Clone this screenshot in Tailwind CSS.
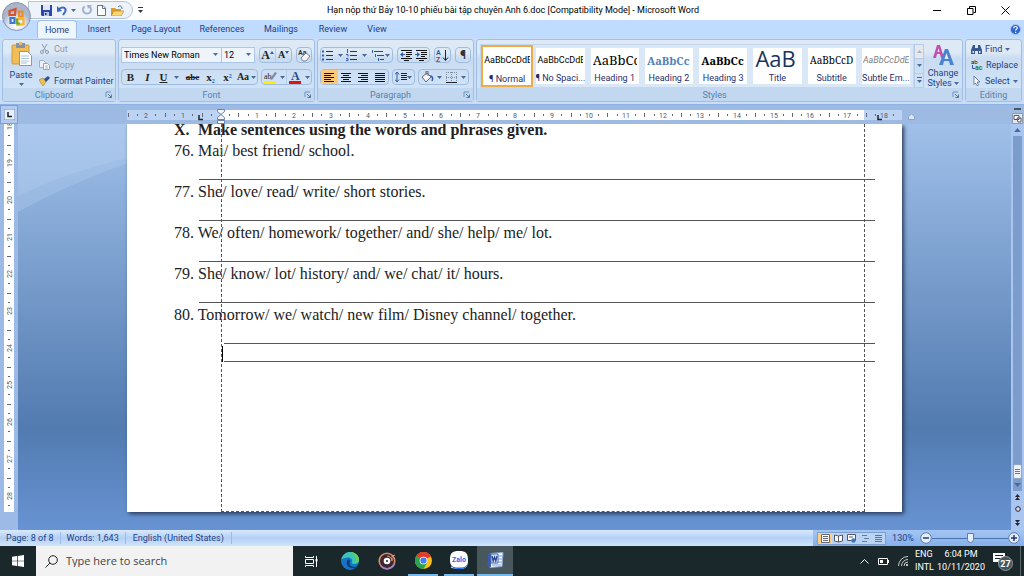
<!DOCTYPE html>
<html lang="en">
<head>
<meta charset="utf-8">
<meta name="viewport" content="width=device-width, initial-scale=1">
<title>Microsoft Word</title>
<script src="https://cdn.jsdelivr.net/npm/@tailwindcss/browser@4"></script>
</head>
<body class="h-screen overflow-hidden flex flex-col font-['Roboto','Noto_Sans',sans-serif] text-[9px] leading-3 text-[#1e3f85] bg-[#9cb9e3] whitespace-nowrap">

<svg class="hidden" aria-hidden="true">
  <symbol id="drop" viewBox="0 0 5 3"><path d="M0 0h5L2.500 3z" fill="#4a6a9c"/></symbol>
  <symbol id="launch" viewBox="0 0 8 8"><path d="M1 6V1h5" fill="none" stroke="#6f93c0"/><path d="M3 3l3 3M6.500 3.500v3h-3" fill="none" stroke="#55779f"/></symbol>
  <symbol id="al" viewBox="0 0 12 10"><path d="M1 1.500h10M1 3.500h7M1 5.500h10M1 7.500h7M1 9.500h10" stroke="#111"/></symbol>
  <symbol id="ac" viewBox="0 0 12 10"><path d="M1 1.500h10M3 3.500h6M1 5.500h10M3 7.500h6M1 9.500h10" stroke="#111"/></symbol>
  <symbol id="ar" viewBox="0 0 12 10"><path d="M1 1.500h10M4 3.500h7M1 5.500h10M4 7.500h7M1 9.500h10" stroke="#111"/></symbol>
  <symbol id="aj" viewBox="0 0 12 10"><path d="M1 1.500h10M1 3.500h10M1 5.500h10M1 7.500h10M1 9.500h10" stroke="#111"/></symbol>
  <symbol id="bul" viewBox="0 0 11 12"><path d="M4 2.500h7M4 6.500h7M4 10.500h7" stroke="#334"/><path d="M0 1.500h2v2H0zM0 5.500h2v2H0zM0 9.500h2v2H0z" fill="#2f5ba8"/></symbol>
  <symbol id="num" viewBox="0 0 11 12"><path d="M4 2.500h7M4 6.500h7M4 10.500h7" stroke="#334"/><path d="M1.500 0v4M0 5.500h2v2M0 9.500h2v2H0" fill="none" stroke="#2f5ba8"/></symbol>
  <symbol id="multi" viewBox="0 0 14 12"><path d="M3 2.500h9M6 6.500h7M9 10.500h4" stroke="#445"/><path d="M1.500 1v3M4.500 5v3M7.500 9v3" stroke="#2f5ba8"/></symbol>
  <symbol id="ind" viewBox="0 0 12 11"><path d="M1 .5h11M6 2.500h6M6 4.500h6M6 6.500h4M1 8.500h11M4 10.500h5" stroke="#111"/><path d="M0 4.500L3 2v2h2v1H3v2z" fill="#2f5ba8"/></symbol>
  <symbol id="indr" viewBox="0 0 12 11"><path d="M1 .5h11M6 2.500h6M6 4.500h6M6 6.500h4M1 8.500h11M4 10.500h5" stroke="#111"/><path d="M5 4.500L2 2v2H0v1h2v2z" fill="#2f5ba8"/></symbol>
</svg>

<header class="relative shrink-0">
  <div class="h-5 bg-white flex items-center">
    <div class="ml-7 h-[18px] w-[105px] pl-3 pr-2 rounded-r-full border border-[#b5c3d8] bg-[#eef3fa] flex items-center justify-between">
      <button aria-label="Save"><svg class="size-[11px]" viewBox="0 0 11 11"><path d="M0 0h11v11H1L0 10z" fill="#2d47a8"/><path d="M2 0h7v5H2z" fill="#dfe8fb"/><path d="M3 7h5v4H3z" fill="#b8c5ea"/><path d="M4 8h1.500v2H4z" fill="#22357f"/></svg></button>
      <button aria-label="Undo" class="flex items-center gap-1"><svg class="w-[10px] h-[11px]" viewBox="0 0 10 11"><path d="M2 4c4-3 8-1 6 3L6 10" fill="none" stroke="#3d66bd" stroke-width="2"/><path d="M0 1v6l5-1z" fill="#3d66bd"/></svg><svg class="w-[5px] h-[3px]"><use href="#drop"/></svg></button>
      <button aria-label="Redo"><svg class="size-[10px]" viewBox="0 0 10 10"><path d="M2.500 1.500a4 4 0 1 0 5 0" fill="none" stroke="#9db2d2" stroke-width="2"/><path d="M5 0h5L6 4z" fill="#9db2d2"/></svg></button>
      <button aria-label="New"><svg class="w-[9px] h-[11px]" viewBox="0 0 9 11"><path d="M.5.5h5.500L8.500 3v7.500h-8z" fill="#fff" stroke="#65758f"/><path d="M5.500.5V3.500h3" fill="none" stroke="#65758f"/></svg></button>
      <button aria-label="Open"><svg class="w-[13px] h-[11px]" viewBox="0 0 13 11"><path d="M0 3h4l1 1h5v7H0z" fill="#d99b2b"/><path d="M3 6h10l-3 5H0z" fill="#fbd773" stroke="#b7822a" stroke-width=".6"/><path d="M7 2c2-2 4-1 4 2" fill="none" stroke="#456cb4"/></svg></button>
    </div>
    <button aria-label="Customize toolbar" class="ml-[5px]"><svg class="w-[5px] h-[6px]" viewBox="0 0 5 6"><path d="M0 .5h5" stroke="#334"/><path d="M0 3h5L2.500 6z" fill="#334"/></svg></button>
    <h1 class="flex-1 text-center text-black pr-[50px]">Hạn nộp thứ Bảy 10-10 phiếu bài tập chuyên Anh 6.doc [Compatibility Mode] - Microsoft Word</h1>
    <div class="flex items-center gap-[25px] mr-[14px]">
      <button aria-label="Minimize"><svg class="size-[9px]" viewBox="0 0 9 9"><path d="M0 4.500h8" stroke="#000"/></svg></button>
      <button aria-label="Restore"><svg class="size-[9px]" viewBox="0 0 9 9"><path d="M.5 2.500h5.500v6H.5zM2.500 2V.5h6v6H6.500" fill="none" stroke="#000"/></svg></button>
      <button aria-label="Close"><svg class="size-[9px]" viewBox="0 0 9 9"><path d="M.5.5l8 8M8.500.5l-8 8" stroke="#000"/></svg></button>
    </div>
  </div>

  <nav class="h-[18px] bg-[#bfdbff] flex items-stretch pl-[37px]">
    <button class="w-10 rounded-t border border-b-0 border-[#9ebfe8] bg-[#eef5fd]">Home</button>
    <button class="w-11">Insert</button>
    <button class="w-[70px]">Page Layout</button>
    <button class="w-[62px]">References</button>
    <button class="w-14">Mailings</button>
    <button class="w-12">Review</button>
    <button class="w-10">View</button>
    <button aria-label="Help" class="ml-auto mr-[3px]"><svg class="size-[11px]" viewBox="0 0 11 11"><circle cx="5.500" cy="5.500" r="5" fill="#2f66cf" stroke="#a9c5ef"/><path d="M3.700 4.300c0-2.500 3.700-2.300 3.600-.2 0 1.200-1.700 1.200-1.700 2.500M5.600 7.700V9" fill="none" stroke="#fff" stroke-width="1.200"/></svg></button>
  </nav>

  <button aria-label="Office Button" class="absolute left-[2px] top-[2px]"><svg class="size-[29px]" viewBox="0 0 29 29">
    <defs><radialGradient id="orb" cy=".8"><stop offset="0" stop-color="#fff"/><stop offset=".6" stop-color="#dde3ee"/><stop offset="1" stop-color="#a9b6cc"/></radialGradient></defs>
    <circle cx="14.500" cy="14.500" r="14" fill="url(#orb)" stroke="#8594ae"/>
    <g fill="none" stroke-width="2.200"><path d="M13 13H7.500V9l6-2z" stroke="#d9502a"/><path d="M15.500 9.500h5v5h-3.500v-5" stroke="#f08a24"/><path d="M12.500 16v5h-4v-5z" stroke="#3f78cf"/><path d="M15.500 17h6v5l-6 1z" stroke="#f2b92c"/><path d="M15 16.500v5h3" stroke="#63ab3a"/></g></svg></button>

  <!-- Ribbon -->
  <div class="h-[67px] px-[2px] pt-px pb-[2px] flex gap-[2px] border-b border-[#8db2e3] bg-[#c9def6]">

    <section class="w-[114px] rounded-[3px] border border-[#9fc0e4] flex flex-col bg-linear-to-b from-[#dee9f6] from-20% via-[#c9dcf1] via-30% to-[#d3e5f9]">
      <div class="flex-1 flex">
        <button class="w-9 flex flex-col items-center pt-[2px]">
          <svg class="w-[21px] h-6" viewBox="0 0 21 24"><rect x="1" y="3" width="17" height="19" rx="1" fill="#f0bd57" stroke="#d09a3e"/><path d="M5 1h9v5H5z" fill="#8a93a5"/><path d="M8 0h3v3H8z" fill="#f0bd57"/><path d="M8.500 9.500h8l4 4v10h-12z" fill="#fff" stroke="#8898b5"/><path d="M10 14h8M10 16.500h8M10 19h8M10 21h6" stroke="#9db0d3" stroke-width=".8"/></svg>
          <span class="mt-[3px]">Paste</span>
          <svg class="w-[5px] h-[3px] mt-[2px]"><use href="#drop"/></svg>
        </button>
        <div class="flex flex-col pt-[3px] gap-[4px]">
          <button class="flex items-center gap-1 text-[#8d97a8]"><svg class="w-[11px] h-[10px]" viewBox="0 0 11 10"><path d="M3 0l4 7M8 0L4 7" stroke="#8c9bb3"/><circle cx="3" cy="8" r="1.500" fill="none" stroke="#8c9bb3"/><circle cx="8" cy="8" r="1.500" fill="none" stroke="#8c9bb3"/></svg>Cut</button>
          <button class="flex items-center gap-1 text-[#8d97a8]"><svg class="w-[11px] h-[10px]" viewBox="0 0 11 10"><path d="M.5.500h4l2 2v5h-6z" fill="#eef2f8" stroke="#a3b0c6"/><path d="M4.500 3.500h4l2 2v4h-6z" fill="#fff" stroke="#97a5be"/><path d="M6 6h3M6 8h3" stroke="#a3b0c6"/></svg>Copy</button>
          <button class="flex items-center gap-1"><svg class="w-[11px] h-[10px]" viewBox="0 0 11 10"><path d="M0 4l4-2 3 4-3 4z" fill="#f3c04b" stroke="#9b7b35" stroke-width=".6"/><path d="M5 3l2 3 4-4-2-2z" fill="#31508f"/></svg>Format Painter</button>
        </div>
      </div>
      <footer class="h-[13px] flex items-center bg-[#c1d8f0] text-[#5b7fae]"><span class="flex-1 text-center">Clipboard</span><button aria-label="Clipboard options" class="mr-[2px]"><svg class="size-2"><use href="#launch"/></svg></button></footer>
    </section>

    <section class="w-[197px] rounded-[3px] border border-[#9fc0e4] flex flex-col bg-linear-to-b from-[#dee9f6] from-20% via-[#c9dcf1] via-30% to-[#d3e5f9]">
      <div class="flex-1 flex flex-col px-[2px] pt-[7px] gap-[6px]">
        <div class="flex gap-[4px]">
          <div class="flex h-4 text-black">
            <label class="relative flex"><select aria-label="Font" class="appearance-none w-[101px] h-4 pl-[2px] bg-[#eef4fb] border border-[#adc6e5]"><option>Times New Roman</option></select><svg class="absolute right-[4px] top-[6px] w-[5px] h-[3px] pointer-events-none"><use href="#drop"/></svg></label>
            <label class="relative flex"><select aria-label="Font size" class="appearance-none w-[33px] h-4 pl-[2px] bg-[#eef4fb] border border-l-0 border-[#adc6e5]"><option>12</option></select><svg class="absolute right-[4px] top-[6px] w-[5px] h-[3px] pointer-events-none"><use href="#drop"/></svg></label>
          </div>
          <div class="flex h-4 w-[34px] rounded-sm border border-[#a0bde0] text-[#222] font-['Liberation_Serif',serif] font-bold">
            <button aria-label="Grow font" class="flex-1 flex items-center justify-center text-[12px]">A<svg class="w-1 h-[3px] mb-[6px]" viewBox="0 0 4 3"><path d="M0 3h4L2 0z" fill="#2f5ba8"/></svg></button>
            <button aria-label="Shrink font" class="flex-1 flex items-center justify-center text-[10px] border-l border-[#b8cde8]">A<svg class="w-1 h-[3px] mb-[6px]" viewBox="0 0 4 3"><path d="M0 0h4L2 3z" fill="#2f5ba8"/></svg></button>
          </div>
          <button aria-label="Clear formatting" class="h-4 w-4 rounded-sm border border-[#a0bde0] flex items-center justify-center"><svg class="size-[13px]" viewBox="0 0 13 13"><text x="0" y="6" font-size="7" font-weight="bold" fill="#333">Aa</text><path d="M3 9l5-5 4 3-4 5H5z" fill="#f7f7fb" stroke="#667" stroke-width=".8"/></svg></button>
        </div>
        <div class="flex gap-[3px] text-[#222] font-['Liberation_Serif',serif]">
          <div class="flex h-4 w-[137px] rounded-sm border border-[#a0bde0] items-stretch text-[11px] font-bold">
            <button class="w-[17px]">B</button>
            <button class="w-[17px] italic">I</button>
            <button class="w-[27px] flex items-center justify-center gap-[7px]"><span class="underline">U</span><svg class="w-[5px] h-[3px]"><use href="#drop"/></svg></button>
            <button class="w-[19px] text-[9px] line-through">abe</button>
            <button class="w-[17px]">x<sub class="text-[6px] text-[#2f5ba8]">2</sub></button>
            <button class="w-[17px]">x<sup class="text-[6px] text-[#2f5ba8]">2</sup></button>
            <button class="flex-1 flex items-center justify-center gap-[2px] text-[10px]">Aa<svg class="w-[5px] h-[3px]"><use href="#drop"/></svg></button>
          </div>
          <div class="flex h-4 w-[51px] rounded-sm border border-[#a0bde0]">
            <button aria-label="Highlight" class="flex-1 flex items-center justify-center gap-[3px]"><svg class="size-[13px]" viewBox="0 0 13 13"><text x="0" y="8" font-size="8" fill="#222">ab</text><path d="M6 8l5-7 2 1-5 7z" fill="#7c8ca8"/><path d="M0 10h12v3H0z" fill="#ffef00"/></svg><svg class="w-[5px] h-[3px]"><use href="#drop"/></svg></button>
            <button aria-label="Font color" class="flex-1 flex items-center justify-center gap-[3px] border-l border-[#b8cde8]"><svg class="size-[13px]" viewBox="0 0 13 13"><text x="2" y="9" font-size="12" font-weight="bold" fill="#2d4a86">A</text><path d="M0 10h12v3H0z" fill="#e8100c"/></svg><svg class="w-[5px] h-[3px]"><use href="#drop"/></svg></button>
          </div>
        </div>
      </div>
      <footer class="h-[13px] flex items-center bg-[#c1d8f0] text-[#5b7fae]"><span class="flex-1 text-center">Font</span><button aria-label="Font options" class="mr-[2px]"><svg class="size-2"><use href="#launch"/></svg></button></footer>
    </section>

    <section class="w-[157px] rounded-[3px] border border-[#9fc0e4] flex flex-col bg-linear-to-b from-[#dee9f6] from-20% via-[#c9dcf1] via-30% to-[#d3e5f9]">
      <div class="flex-1 flex flex-col px-[2px] pt-[7px] gap-[6px]">
        <div class="flex gap-[4px]">
          <div class="flex h-4 w-[73px] rounded-sm border border-[#a0bde0]">
            <button aria-label="Bullets" class="flex-1 flex items-center justify-center gap-[5px]"><svg class="w-[11px] h-3"><use href="#bul"/></svg><svg class="w-[5px] h-[3px]"><use href="#drop"/></svg></button>
            <button aria-label="Numbering" class="flex-1 flex items-center justify-center gap-[5px]"><svg class="w-[11px] h-3"><use href="#num"/></svg><svg class="w-[5px] h-[3px]"><use href="#drop"/></svg></button>
            <button aria-label="Multilevel list" class="flex-1 flex items-center justify-center"><svg class="w-[14px] h-3"><use href="#multi"/></svg><svg class="w-[5px] h-[3px]"><use href="#drop"/></svg></button>
          </div>
          <div class="flex h-4 w-[33px] rounded-sm border border-[#a0bde0]">
            <button aria-label="Decrease indent" class="flex-1 flex items-center justify-center"><svg class="w-3 h-[11px]"><use href="#ind"/></svg></button>
            <button aria-label="Increase indent" class="flex-1 flex items-center justify-center"><svg class="w-3 h-[11px]"><use href="#indr"/></svg></button>
          </div>
          <button aria-label="Sort" class="h-4 w-[17px] rounded-sm border border-[#a0bde0] flex items-center justify-center"><svg class="size-[13px]" viewBox="0 0 13 13"><text x="0" y="6" font-size="7" font-weight="bold" fill="#2f5ba8">A</text><text x="0" y="13" font-size="7" font-weight="bold" fill="#b03050">Z</text><path d="M9.500 1v10M7 8.500l2.500 3 2.500-3" fill="none" stroke="#222"/></svg></button>
          <button aria-label="Show marks" class="h-4 w-[16px] rounded-sm border border-[#a0bde0] text-[12px] font-bold text-[#333]">¶</button>
        </div>
        <div class="flex gap-[3px]">
          <div class="flex h-4 w-[69px] rounded-sm border border-[#a0bde0]">
            <button aria-label="Align left" class="flex-1 flex items-center justify-center bg-[#fdc878]"><svg class="w-3 h-[10px]"><use href="#al"/></svg></button>
            <button aria-label="Center" class="flex-1 flex items-center justify-center"><svg class="w-3 h-[10px]"><use href="#ac"/></svg></button>
            <button aria-label="Align right" class="flex-1 flex items-center justify-center"><svg class="w-3 h-[10px]"><use href="#ar"/></svg></button>
            <button aria-label="Justify" class="flex-1 flex items-center justify-center"><svg class="w-3 h-[10px]"><use href="#aj"/></svg></button>
          </div>
          <button aria-label="Line spacing" class="h-4 w-[23px] rounded-sm border border-[#a0bde0] flex items-center justify-center"><svg class="w-3 h-3" viewBox="0 0 12 12"><path d="M2 1v10M0 3.500l2-2.500 2 2.500M0 8.500L2 11l2-2.500" fill="none" stroke="#2f5ba8"/><path d="M6 2.500h6M6 4.500h6M6 6.500h6M6 8.500h6" stroke="#222"/></svg><svg class="w-[5px] h-[3px]"><use href="#drop"/></svg></button>
          <div class="flex h-4 w-[51px] rounded-sm border border-[#a0bde0]">
            <button aria-label="Shading" class="flex-1 flex items-center justify-center gap-[3px]"><svg class="size-[13px]" viewBox="0 0 13 13"><path d="M1 6l5-4 4 4-5 5z" fill="#f4f6fa" stroke="#667"/><path d="M5 4V0h2v5" fill="none" stroke="#667"/><path d="M9 5c3 0 3 3 2 5" fill="none" stroke="#2f5ba8" stroke-width="1.500"/></svg><svg class="w-[5px] h-[3px]"><use href="#drop"/></svg></button>
            <button aria-label="Borders" class="flex-1 flex items-center justify-center gap-[4px]"><svg class="size-[11px]" viewBox="0 0 11 11"><path d="M.5 0v10M5.500 0v10M10.500 0v10M0 .5h11M0 5.500h11" stroke="#7d8ba3" stroke-dasharray="1 1"/><path d="M0 10.500h11" stroke="#222"/></svg><svg class="w-[5px] h-[3px]"><use href="#drop"/></svg></button>
          </div>
        </div>
      </div>
      <footer class="h-[13px] flex items-center bg-[#c1d8f0] text-[#5b7fae]"><span class="flex-1 text-center">Paragraph</span><button aria-label="Paragraph options" class="mr-[2px]"><svg class="size-2"><use href="#launch"/></svg></button></footer>
    </section>

    <section class="flex-1 min-w-0 rounded-[3px] border border-[#9fc0e4] flex flex-col bg-linear-to-b from-[#dee9f6] from-20% via-[#c9dcf1] via-30% to-[#d3e5f9]">
      <div class="flex-1 flex pl-[3px] pt-1 justify-between">
        <div class="flex-1 flex h-[44px] text-[#1f2f6d] bg-[#d9e7f7] border border-[#c3d8ef]">
          <button class="flex-1 min-w-0 border-2 border-[#efab45] bg-white overflow-hidden flex flex-col items-center"><span class="h-[26px] w-[46px] overflow-hidden text-left leading-[26px] text-[9px] text-black">AaBbCcDdE</span><span>¶ Normal</span></button>
          <button class="flex-1 min-w-0 m-[3px] bg-white overflow-hidden flex flex-col items-center"><span class="h-[25px] w-[46px] overflow-hidden text-left leading-[25px] text-[9px] text-black">AaBbCcDdE</span><span>¶ No Spaci...</span></button>
          <button class="flex-1 min-w-0 m-[3px] bg-white overflow-hidden flex flex-col items-center"><span class="h-[25px] w-[44px] overflow-hidden text-left leading-[25px] text-[13px] text-black font-['Noto_Serif','Liberation_Serif',serif]">AaBbCc</span><span>Heading 1</span></button>
          <button class="flex-1 min-w-0 m-[3px] bg-white overflow-hidden flex flex-col items-center"><span class="h-[25px] w-[44px] overflow-hidden text-left leading-[25px] text-[11px] font-bold text-[#4f81bd] font-['Noto_Serif','Liberation_Serif',serif]">AaBbCc</span><span>Heading 2</span></button>
          <button class="flex-1 min-w-0 m-[3px] bg-white overflow-hidden flex flex-col items-center"><span class="h-[25px] w-[44px] overflow-hidden text-left leading-[25px] text-[11px] font-bold text-black font-['Noto_Serif','Liberation_Serif',serif]">AaBbCc</span><span>Heading 3</span></button>
          <button class="flex-1 min-w-0 m-[3px] bg-white overflow-hidden flex flex-col items-center"><span class="h-[25px] w-[44px] overflow-hidden text-left leading-[20px] text-[22px] text-[#17365d] font-['Open_Sans',sans-serif]">AaB</span><span>Title</span></button>
          <button class="flex-1 min-w-0 m-[3px] bg-white overflow-hidden flex flex-col items-center"><span class="h-[25px] w-[44px] overflow-hidden text-left leading-[25px] text-[10px] text-black font-['Noto_Serif','DejaVu_Serif',serif]">AaBbCcD</span><span>Subtitle</span></button>
          <button class="flex-1 min-w-0 m-[3px] bg-white overflow-hidden flex flex-col items-center"><span class="h-[25px] w-[46px] overflow-hidden text-left leading-[25px] text-[9px] italic text-[#808080]">AaBbCcDdE</span><span>Subtle Em...</span></button>
        </div>
        <div class="w-[10px] h-[44px] flex flex-col border border-[#b4cdea]">
          <button aria-label="Styles up" class="flex-1 flex items-center justify-center bg-[#e8e8ea]"><svg class="w-[5px] h-[3px] rotate-180 opacity-40"><use href="#drop"/></svg></button>
          <button aria-label="Styles down" class="flex-1 flex items-center justify-center border-y border-[#b4cdea]"><svg class="w-[5px] h-[3px]"><use href="#drop"/></svg></button>
          <button aria-label="More styles" class="flex-1 flex items-center justify-center"><svg class="w-[5px] h-[6px]" viewBox="0 0 5 6"><path d="M0 .5h5" stroke="#4a6a9c"/><path d="M0 3h5L2.500 6z" fill="#4a6a9c"/></svg></button>
        </div>
        <button class="w-[38px] flex flex-col items-center"><svg class="w-[22px] h-[22px]" viewBox="0 0 22 22"><path d="M1 14L5 1h3l4 13H9L8 10H5l-1 4z" fill="#c04fb0"/><path d="M5.500 8h2l-1-4z" fill="#e3edf9"/><path d="M7 21l6-16h3l6 16h-4l-1-4h-5l-1 4z" fill="#4b83cf"/><path d="M12.500 15h4l-2-6z" fill="#e3edf9"/></svg><span class="mt-[2px] h-[10px] leading-[10px]">Change</span><span class="h-[10px] leading-[10px] flex items-center gap-[2px]">Styles <svg class="w-[5px] h-[3px]"><use href="#drop"/></svg></span></button>
      </div>
      <footer class="h-[13px] flex items-center bg-[#c1d8f0] text-[#5b7fae]"><span class="flex-1 text-center">Styles</span><button aria-label="Styles options" class="mr-[2px]"><svg class="size-2"><use href="#launch"/></svg></button></footer>
    </section>

    <section class="w-[57px] rounded-[3px] border border-[#9fc0e4] flex flex-col bg-linear-to-b from-[#dee9f6] from-20% via-[#c9dcf1] via-30% to-[#d3e5f9]">
      <div class="flex-1 flex flex-col pl-[5px] pt-[3px] gap-[4px]">
        <button class="flex items-center gap-[3px]"><svg class="w-[11px] h-[10px]" viewBox="0 0 11 10"><path d="M0 10V6l2-5h2v9zM11 10V6L9 1H7v9zM4 4h3v3H4z" fill="#39578f"/><path d="M1.500 7h1.500v2H1.500zM8 7h1.500v2H8z" fill="#dfe9f7"/></svg>Find<svg class="w-[5px] h-[3px]"><use href="#drop"/></svg></button>
        <button class="flex items-center gap-[3px]" aria-label="Replace"><svg class="w-[12px] h-3" viewBox="0 0 12 12"><text x="0" y="5" font-size="6" fill="#222">ab</text><text x="4" y="11" font-size="7" font-weight="bold" fill="#2c7a3a">ac</text><path d="M1.500 6v3.500H4" fill="none" stroke="#2f5ba8"/></svg>Replace</button>
        <button class="flex items-center gap-[3px]"><svg class="w-[11px] h-[10px]" viewBox="0 0 11 10"><path d="M3 0l6 6H6l1.500 3-1.500.8L4.500 7 3 8.500z" fill="#fff" stroke="#556b90" stroke-width=".8"/></svg>Select<svg class="w-[5px] h-[3px]"><use href="#drop"/></svg></button>
      </div>
      <footer class="h-[13px] flex items-center justify-center bg-[#c1d8f0] text-[#5b7fae]">Editing</footer>
    </section>
  </div>
</header>

<!-- Horizontal ruler -->
<div class="h-[19px] shrink-0 flex items-stretch bg-[#9dbae3]">
  <button aria-label="Tab type" class="w-[18px] shrink-0 border border-[#7e9ed2] bg-[#b4cbee] flex items-center justify-center"><svg class="size-[11px]" viewBox="0 0 11 11"><path d="M0 0h11v11H0z" fill="#e6effb" stroke="#6a8bc4"/><path d="M4 3v4.500h4" fill="none" stroke="#222" stroke-width="1.500"/></svg></button>
  <div class="flex-1 flex justify-center"><svg id="hruler" class="w-[775px] h-[19px] overflow-visible" viewBox="0 0 775 19"></svg></div>
  <button aria-label="View ruler" class="w-[13px] shrink-0 flex items-end justify-center"><svg class="w-[11px] h-4" viewBox="0 0 11 16"><path d="M2 1h7" stroke="#334" stroke-width="1.500"/><path d="M.5 5.500h10v10H.5z" fill="#e4e8ef" stroke="#8c9bb3"/><path d="M2 7.500h5v4H2zM5 10h4v4H6z" fill="#fff" stroke="#556"/></svg></button>
</div>

<main class="flex-1 min-h-0 flex items-stretch overflow-hidden">
  <aside class="w-[18px] shrink-0 bg-[#9dbae6]"><svg id="vruler" class="w-[18px] h-[388px]" viewBox="0 0 18 388"></svg></aside>
  <div class="relative flex-1 flex justify-center items-start pb-[18px] bg-linear-to-b from-[#a0c0e9] via-[#527bb0] via-75% to-[#6893d3]">
    <svg class="absolute left-0 top-0 w-[110px] h-[90px]" viewBox="0 0 110 90"><path d="M0 0h110v34Q50 48 0 72z" fill="#b4cef0" opacity=".55"/><path d="M0 72Q50 48 110 34v5Q50 60 0 88z" fill="#b4cef0" opacity=".35"/></svg>
    <article class="relative w-[775px] h-full bg-white shadow-[2px_2px_4px_#2a3c5c] font-['Liberation_Serif',serif] text-[16px] leading-5 text-[#222]">
      <div class="h-full overflow-hidden pl-[47px] pr-[27px]">
        <h2 class="-mt-1 h-5 flex font-bold"><span class="w-6">X.</span>Make sentences using the words and phrases given.</h2>
        <p class="h-[21px] pt-px">76. Mai/ best friend/ school.</p>
        <div class="h-5 ml-[25px] -mt-px mb-px border-b border-[#555]"></div>
        <p class="h-[21px] pt-px">77. She/ love/ read/ write/ short stories.</p>
        <div class="h-5 ml-[25px] -mt-px mb-px border-b border-[#555]"></div>
        <p class="h-[21px] pt-px">78. We/ often/ homework/ together/ and/ she/ help/ me/ lot.</p>
        <div class="h-5 ml-[25px] -mt-px mb-px border-b border-[#555]"></div>
        <p class="h-[21px] pt-px">79. She/ know/ lot/ history/ and/ we/ chat/ it/ hours.</p>
        <div class="h-5 ml-[25px] -mt-px mb-px border-b border-[#555]"></div>
        <p class="h-[21px] pt-px">80. Tomorrow/ we/ watch/ new film/ Disney channel/ together.</p>
        <div class="h-5 ml-[50px] -mt-px border-b border-[#555]"></div>
        <div class="h-[18px] ml-[48px] flex"><i class="w-px h-4 mt-[2px] mr-px bg-black"></i><span class="flex-1 border-b border-[#555]"></span></div>
      </div>
      <div class="absolute left-[94px] right-[37px] inset-y-0 border border-t-0 border-dashed border-[#555]"></div>
    </article>
  </div>
  <div class="w-[13px] shrink-0 bg-[#aac6f0] flex flex-col items-center text-[#223]">
    <button aria-label="Scroll up" class="h-3"><svg class="w-[7px] h-1 rotate-180"><use href="#drop"/></svg></button>
    <div class="flex-1 w-[9px] bg-[#7c9dcb] flex flex-col justify-end"><div class="h-[15px] rounded-[2px] border border-[#8fa3c2] bg-[#eef2f8] flex items-center justify-center"><svg class="w-[5px] h-[5px]" viewBox="0 0 5 5"><path d="M0 .5h5M0 2.500h5M0 4.500h5" stroke="#778"/></svg></div></div>
    <button aria-label="Scroll down" class="h-3 w-[9px] bg-[#7c9dcb] flex items-center justify-center"><svg class="w-[7px] h-1"><use href="#drop"/></svg></button>
    <button aria-label="Previous page" class="h-3"><svg class="w-[5px] h-[6px]" viewBox="0 0 5 6"><path d="M0 3L2.500 0 5 3zM0 6l2.500-3L5 6z" fill="#223"/></svg></button>
    <button aria-label="Browse object" class="h-3"><svg class="size-[6px]" viewBox="0 0 6 6"><circle cx="3" cy="3" r="2.300" fill="#dde" stroke="#223"/></svg></button>
    <button aria-label="Next page" class="h-[15px]"><svg class="w-[5px] h-[6px]" viewBox="0 0 5 6"><path d="M0 0l2.500 3L5 0zM0 3l2.500 3L5 3z" fill="#223"/></svg></button>
  </div>
</main>

<footer class="h-4 shrink-0 flex items-center bg-linear-to-b from-[#d9e9fb] via-[#b3d0f5] to-[#d0e5fb] pl-[6px]">
  <span class="pr-[6px] border-r border-[#9dbbe6]">Page: 8 of 8</span>
  <span class="px-[6px] border-r border-[#9dbbe6]">Words: 1,643</span>
  <span class="px-[7px] border-r border-[#9dbbe6]">English (United States)</span>
  <div class="ml-auto h-full flex items-center bg-linear-to-b from-[#a5c5f2] to-[#84b0ec] pl-1 pr-[4px]">
    <div class="flex h-[13px] border border-[#7d9fd0] bg-[#bcd4f3]">
      <button aria-label="Print layout" class="w-[14px] flex items-center justify-center bg-[#fbd08a]"><svg class="size-[9px]" viewBox="0 0 9 9"><path d="M.5.500h8v8h-8z" fill="#fff" stroke="#667"/><path d="M2 2.500h5M2 4.500h5M2 6.500h5" stroke="#667"/></svg></button>
      <button aria-label="Reading" class="w-[13px] flex items-center justify-center"><svg class="size-[9px]" viewBox="0 0 9 9"><path d="M.5 1l4 1 4-1v6l-4 1-4-1zM4.500 2v6" fill="#fff" stroke="#556"/></svg></button>
      <button aria-label="Web layout" class="w-[13px] flex items-center justify-center"><svg class="size-[9px]" viewBox="0 0 9 9"><path d="M.5.500h8v6h-8z" fill="#fff" stroke="#556"/><path d="M2 3h4" stroke="#556"/><circle cx="6.500" cy="6.500" r="2.200" fill="#3d76c4"/></svg></button>
      <button aria-label="Outline" class="w-[14px] flex items-center justify-center"><svg class="size-[9px]" viewBox="0 0 9 9"><path d="M1 1.500h5M3 4.500h5M1 7.500h5" stroke="#667c9c"/></svg></button>
      <button aria-label="Draft" class="w-[13px] flex items-center justify-center"><svg class="size-[9px]" viewBox="0 0 9 9"><path d="M1 1.500h7M1 3.500h7M1 5.500h7M1 7.500h7" stroke="#5d7396"/></svg></button>
    </div>
    <button class="w-[34px]">130%</button>
    <button aria-label="Zoom out"><svg class="size-3" viewBox="0 0 12 12"><circle cx="6" cy="6" r="5.300" fill="#e6eefa" stroke="#5b7db5"/><path d="M3 6h6" stroke="#223a70" stroke-width="1.500"/></svg></button>
    <input type="range" aria-label="Zoom" min="0" max="100" value="50" class="appearance-none w-[76px] h-3 bg-transparent bg-[linear-gradient(#4f74ae,#4f74ae)] bg-[length:100%_1px] bg-center bg-no-repeat [&::-webkit-slider-thumb]:appearance-none [&::-webkit-slider-thumb]:w-[7px] [&::-webkit-slider-thumb]:h-[10px] [&::-webkit-slider-thumb]:rounded-b-full [&::-webkit-slider-thumb]:border [&::-webkit-slider-thumb]:border-[#5b7db5] [&::-webkit-slider-thumb]:bg-[#e6eefa]">
    <button aria-label="Zoom in"><svg class="size-3" viewBox="0 0 12 12"><circle cx="6" cy="6" r="5.300" fill="#e6eefa" stroke="#5b7db5"/><path d="M3 6h6M6 3v6" stroke="#223a70" stroke-width="1.500"/></svg></button>
  </div>
</footer>

<nav class="h-[30px] shrink-0 flex items-stretch bg-[#1a282b] text-white">
  <button aria-label="Start" class="w-9 flex items-center justify-center"><svg class="size-3" viewBox="0 0 12 12"><path d="M0 1.700l5-.7v4.700H0zM5.700.900L12 0v5.700H5.700zM0 6.300h5V11l-5-.7zM5.700 6.300H12V12l-6.300-.9z" fill="#fff"/></svg></button>
  <label class="w-[257px] bg-[#f2f2f2] flex items-center pl-[9px] gap-2"><svg class="w-[13px] h-[13px]" viewBox="0 0 13 13"><circle cx="8" cy="5" r="4.300" fill="none" stroke="#222"/><path d="M5 8L.5 12.500" stroke="#222"/></svg><input type="text" aria-label="Search" placeholder="Type here to search" class="flex-1 bg-transparent font-['Open_Sans',sans-serif] text-[11px] text-[#333] placeholder:text-[#444] outline-none"></label>
  <button aria-label="Task view" class="w-[37px] flex items-center justify-center"><svg class="w-[13px] h-[11px]" viewBox="0 0 13 11"><path d="M.5 0v1.500h8V0M.5 11V9.500h8V11M.5 3.500h8v4h-8zM11.500 0v11" fill="none" stroke="#fff"/><path d="M10.500 3h2v2.500h-2z" fill="#fff"/></svg></button>
  <button aria-label="Edge" class="w-[39px] flex items-center justify-center"><svg class="size-[18px]" viewBox="0 0 18 18"><circle cx="9" cy="9" r="9" fill="#1673c5"/><path d="M.3 7.500C1.500 2.500 5 0 9 0c5.500 0 9 4 9 7.500 0 3-2.500 4.500-5 4.500-2 0-2.700-.8-2.300-1.500 1.500-2.500-.5-5-4-5-3 0-5 1-6.400 2z" fill="#3cc5b0"/><path d="M10 0c5 .5 8 4 8 7.500 0 2-1 3.500-2.500 4C16 7 14 3 10 0z" fill="#64d155"/><path d="M6.500 8c-2 3-.5 8.500 6 8.200 1.500 0 3-1 3.800-2-4 1.700-7.500.3-7.600-3.200 0-1 .5-2 .3-2.500C8.500 7.500 7 7.300 6.500 8z" fill="#0b3f7c"/></svg></button>
  <button aria-label="Music" class="w-9 flex items-center justify-center"><svg class="size-[18px]" viewBox="0 0 18 18"><circle cx="9" cy="9" r="7.800" fill="#3b2735" stroke="#d98d66" stroke-width="1.600"/><path d="M3 14a7.800 7.800 0 0 0 13.500-3" fill="none" stroke="#9d82c4" stroke-width="1.600"/><path d="M9 4a5 5 0 0 1 5 5V4l3-1" fill="none" stroke="#e39a78"/><circle cx="9" cy="9" r="3.300" fill="#fff"/><circle cx="9" cy="9" r="1" fill="#222"/></svg></button>
  <button aria-label="Chrome" class="w-[30px] mx-[3px] flex items-center justify-center border-b-2 border-[#76b9ed]"><svg class="size-[17px]" viewBox="0 0 18 18"><circle cx="9" cy="9" r="9" fill="#fbc116"/><path d="M9 9L1.200 4.500A9 9 0 0 1 16.800 4.500z" fill="#e33b2e"/><path d="M9 9L1.200 4.500A9 9 0 0 0 9 18l3.900-6.700z" fill="#2ba24c"/><path d="M9 5h8.100a9 9 0 0 0-.3-.5L9 3z" fill="#e33b2e"/><circle cx="9" cy="9" r="4.100" fill="#fff"/><circle cx="9" cy="9" r="3.300" fill="#3f7ef0"/></svg></button>
  <button aria-label="Zalo" class="w-[30px] mx-[3px] flex items-center justify-center border-b-2 border-[#76b9ed]"><svg class="size-[18px]" viewBox="0 0 18 18"><path d="M9 0c7 0 9 2 9 9s-2 9-9 9c-3 0-4 0-5-.7L1 17l.8-2C.5 13.500 0 12 0 9c0-7 2-9 9-9z" fill="#fff"/><path d="M1 14c1 3 3 4 8 4s8-1 8.500-5c-1.500 3-4 3.500-8.500 3.500S2.500 16 1 14z" fill="#1b6df0"/><text x="9" y="11" font-size="7" font-weight="bold" text-anchor="middle" fill="#1b6df0">Zalo</text></svg></button>
  <button aria-label="Word" class="w-9 flex items-center justify-center bg-[#48575b] border-b-2 border-[#76b9ed]"><svg class="w-[18px] h-[16px]" viewBox="0 0 18 16"><path d="M4 1.500L17 .5l-1 14-12 1z" fill="#f2f6fd" stroke="#8fa8d6"/><path d="M12 4h4M12 7h4M11 10h5M6 13h9" stroke="#7f9bd0"/><path d="M2 2l3-1v14l-4-1z" fill="#3a5ba8"/><path d="M5 2h7v9H5z" fill="#dfe8f8" stroke="#4a6bb5"/><path d="M6 4l1.200 5L8.500 5l1.300 4L11 4" fill="none" stroke="#27468f" stroke-width="1.300"/></svg></button>
  <div class="ml-auto flex items-center">
    <button aria-label="Hidden icons" class="mr-[9px]"><svg class="w-[9px] h-[5px]" viewBox="0 0 9 5"><path d="M.5 4.500l4-4 4 4" fill="none" stroke="#fff"/></svg></button>
    <button aria-label="Battery" class="mr-2"><svg class="w-[12px] h-[7px]" viewBox="0 0 12 7"><path d="M.5.500h9v6h-9zM10.500 2v3" fill="none" stroke="#fff"/><path d="M2 2h3v3H2z" fill="#fff"/></svg></button>
    <button aria-label="Network" class="mr-[7px]"><svg class="size-[10px]" viewBox="0 0 10 10"><path d="M.5 10A9.500 9.500 0 0 1 10 .5M3.500 10A6.500 6.500 0 0 1 10 3.500M6 10a4 4 0 0 1 4-4" fill="none" stroke="#ccc"/><circle cx="9" cy="9" r="1" fill="#fff"/></svg></button>
    <button class="w-[18px] text-left leading-[13px]">ENG<br>INTL</button>
    <button class="w-[56px] text-center leading-[13px]">6:04 PM<br>10/11/2020</button>
    <button aria-label="Notifications" class="ml-1"><svg class="w-[21px] h-[20px]" viewBox="0 0 21 20"><path d="M0 2h12v9H7l-2 2v-2H0z" fill="#fff"/><path d="M2 4.500h8M2 7.500h8" stroke="#1a282b"/><circle cx="12.500" cy="12.500" r="7" fill="#48565a" stroke="#8b9699"/><text x="12.500" y="16" text-anchor="middle" font-size="9" font-weight="bold" fill="#fff">27</text></svg></button>
    <span class="ml-[6px] mr-[3px] w-px h-[30px] bg-[#5a6669]"></span>
  </div>
</nav>

<script>
  const CM = 36.9;
  const tick = (x, y1, y2) => `<path d="M${x} ${y1}V${y2}" stroke="#667"/>`;
  let h = '<rect y="5" width="775" height="10" fill="#bdd3f3"/><rect x="94" y="5" width="643" height="10" fill="#fff"/>';
  for (let q = -10; q <= 73; q++) {
    const x = Math.round(93 + q * CM / 4);
    if (q === 0 || x > 772) continue;
    if (q % 4 === 0) h += `<text x="${x}" y="13" font-size="7" text-anchor="middle" fill="#556">${Math.abs(q / 4)}</text>`;
    else h += q % 2 === 0 ? tick(x + .5, 8, 12) : tick(x + .5, 9, 11);
  }
  h += '<path d="M90.500 4.500h7v2l-3.500 3 3.500 3v2h-7v-2l3.500-3-3.500-3zM90.500 15.500h7v3h-7z" fill="#f4f7fc" stroke="#6b83ab"/>';
  h += '<path d="M72 10v4.500h4M751 10v4.500h4" fill="none" stroke="#223" stroke-width="1.500"/>';
  h += '<path d="M781.500 14.500v-3l3-2.500 3 2.500v3z" fill="#dbe6f6" stroke="#8ba3c9"/>';
  document.getElementById('hruler').innerHTML = h;

  let v = '<rect x="4" width="10" height="388" fill="#fff"/>';
  for (let q = 72; q <= 113; q++) {
    const y = Math.round(2 + (q - 72) * 37 / 4);
    if (q % 4 === 0) v += `<text transform="translate(12 ${y}) rotate(-90)" font-size="7" text-anchor="middle" fill="#556">${q / 4}</text>`;
    else { const r = q % 2 === 0 ? 2 : 1; v += `<path d="M${9 - r} ${y + .5}h${2 * r}" stroke="#667"/>`; }
  }
  document.getElementById('vruler').innerHTML = v;
</script>
</body>
</html>
